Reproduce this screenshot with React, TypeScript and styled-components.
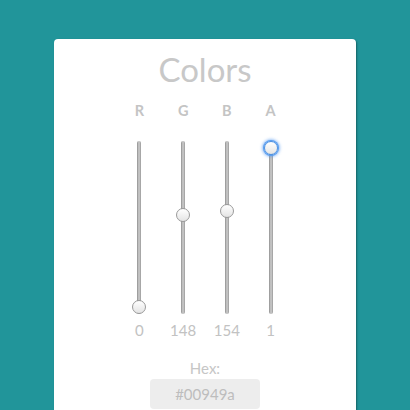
import React from "react";
import styled, { createGlobalStyle } from "styled-components";

const Global = createGlobalStyle`
  html, body { margin: 0; padding: 0; }
  body {
    width: 410px;
    height: 410px;
    overflow: hidden;
    background: #21959a;
    font-family: Lato, "Open Sans", sans-serif;
  }
`;

const Card = styled.div`
  width: 302px;
  height: 371px;
  margin: 39px 0 0 54px;
  background: #ffffff;
  border-radius: 4px 4px 0 0;
  box-shadow: 1px 1px 2px rgba(0, 0, 0, 0.35);
  display: flex;
  flex-direction: column;
  align-items: center;
  padding-top: 10px;
  box-sizing: border-box;
  overflow: hidden;
`;

const Title = styled.h1`
  margin: 0;
  font-size: 33px;
  line-height: 40px;
  font-weight: 400;
  color: #c8c8c8;
`;

const Sliders = styled.div`
  display: flex;
  margin-top: 14px;
`;

const Column = styled.div`
  width: 43.7px;
  display: flex;
  flex-direction: column;
  align-items: center;
`;

const Label = styled.div`
  font-size: 14.5px;
  line-height: 16px;
  font-weight: 700;
  color: #c4c4c4;
`;

const Track = styled.div`
  position: relative;
  margin-top: 22px;
  width: 4px;
  height: 173px;
  border-radius: 2px;
  background: linear-gradient(to right, #8e8e8e, #cfcfcf 50%, #9a9a9a);
`;

const Thumb = styled.div<{ $focus?: boolean }>`
  position: absolute;
  left: 50%;
  width: 14px;
  height: 14px;
  margin-left: -7px;
  margin-top: -7px;
  border-radius: 50%;
  box-sizing: border-box;
  background: linear-gradient(to bottom, #ffffff, #e4e4e4);
  border: 1px solid ${(p) => (p.$focus ? "#4a90e2" : "#9a9a9a")};
  box-shadow: ${(p) =>
    p.$focus ? "0 0 0 1px #5a9ef0, 0 0 3px 2px rgba(80,150,240,0.6)" : "none"};
`;

const Value = styled.div`
  margin-top: 7px;
  font-size: 15px;
  line-height: 18px;
  color: #c2c2c2;
`;

const HexLabel = styled.div`
  margin-top: 20px;
  font-size: 15px;
  line-height: 18px;
  color: #c6c6c6;
`;

const HexBox = styled.div`
  margin-top: 2px;
  width: 110px;
  height: 30px;
  flex-shrink: 0;
  border-radius: 4px;
  background: #ededed;
  display: flex;
  align-items: center;
  justify-content: center;
  font-size: 15px;
  color: #bdbdbd;
`;

const channels = [
  { label: "R", value: 0, max: 255 },
  { label: "G", value: 148, max: 255 },
  { label: "B", value: 154, max: 255 },
  { label: "A", value: 1, max: 1, focus: true },
];

export default function App() {
  const inset = 7;
  const length = 173;
  return (
    <>
      <Global />
      <Card>
        <Title>Colors</Title>
        <Sliders>
          {channels.map((c) => {
            const top = inset + (1 - c.value / c.max) * (length - 2 * inset);
            return (
              <Column key={c.label}>
                <Label>{c.label}</Label>
                <Track>
                  <Thumb $focus={c.focus} style={{ top }} />
                </Track>
                <Value>{c.value}</Value>
              </Column>
            );
          })}
        </Sliders>
        <HexLabel>Hex:</HexLabel>
        <HexBox>#00949a</HexBox>
      </Card>
    </>
  );
}
